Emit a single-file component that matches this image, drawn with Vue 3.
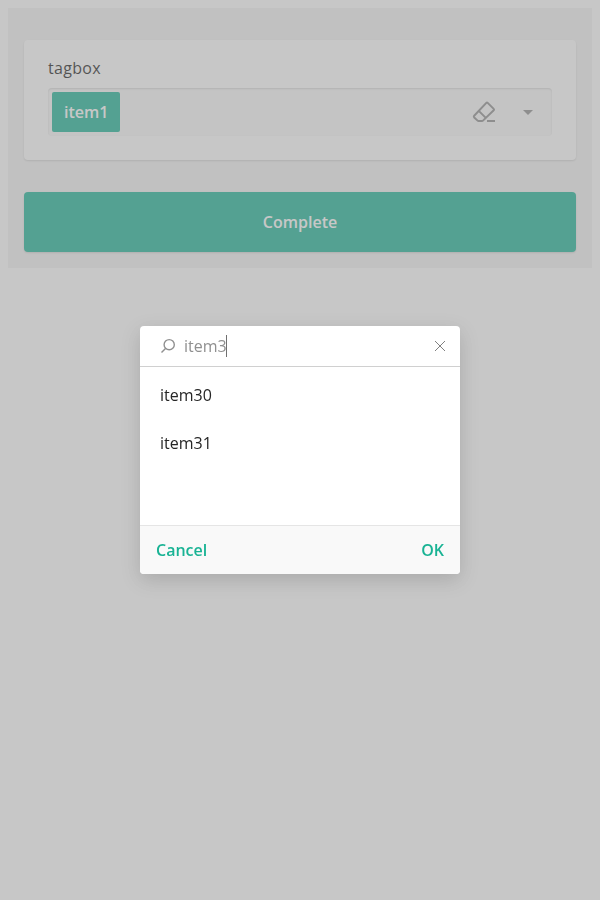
<script setup>
import { ref } from 'vue'

const title = 'tagbox'
const tags = ref(['item1'])
const query = ref('item3')
const options = ['item30', 'item31']
</script>

<template>
  <div class="survey">
    <section class="question">
      <h5 class="title">{{ title }}</h5>
      <div class="field">
        <span v-for="tag in tags" :key="tag" class="tag">{{ tag }}</span>
        <span class="spacer"></span>
        <svg class="eraser" width="24" height="24" viewBox="0 0 24 24" fill="none" stroke="#8c8c8c" stroke-width="2" stroke-linejoin="round">
          <path d="M14.300 2.900a1 1 0 0 1 1.400 0l6 6a1 1 0 0 1 0 1.400L11 20.600a1.400 1.400 0 0 1-1 .4H6.600a1.400 1.400 0 0 1-1-.4l-3.400-3.200a1.200 1.200 0 0 1 0-1.700z" />
          <path d="M6.500 10.600l7.300 7.300M15 21h8" />
        </svg>
        <svg class="arrow" width="10" height="5" viewBox="0 0 10 5"><path d="M0 0h10L5 5z" fill="#8c8c8c" /></svg>
      </div>
    </section>
    <button class="complete">Complete</button>
  </div>

  <div class="overlay">
    <div class="popup">
      <div class="search">
        <svg width="16" height="16" viewBox="0 0 16 16" fill="none" stroke="#909090" stroke-width="1.4">
          <circle cx="9.200" cy="6.700" r="5.100" />
          <path d="M5.500 10.400L1.500 14.400" />
        </svg>
        <span class="query">{{ query }}</span><span class="caret"></span>
        <svg class="close" width="16" height="16" viewBox="0 0 16 16" fill="none" stroke="#808080" stroke-width="1">
          <path d="M3 3l10 10M13 3L3 13" />
        </svg>
      </div>
      <ul class="list">
        <li v-for="option in options" :key="option">{{ option }}</li>
      </ul>
      <div class="footer">
        <button>Cancel</button>
        <button>OK</button>
      </div>
    </div>
  </div>
</template>

<style>
body {
  margin: 0;
  background: #fff;
}
</style>

<style scoped>
* {
  box-sizing: border-box;
}
.survey {
  margin: 8px;
  padding: 32px 16px 16px;
  height: 260px;
  background: #f3f3f3;
  font: 400 16px/24px 'Open Sans', sans-serif;
  color: #161616;
}
.question {
  height: 120px;
  padding: 16px 24px 24px;
  border-radius: 4px;
  background: #fff;
  box-shadow: 0 1px 2px rgba(0, 0, 0, 0.15);
}
.title {
  margin: 0 0 8px;
  font-size: 16px;
  font-weight: 400;
  line-height: 24px;
  letter-spacing: 0.3px;
}
.field {
  display: flex;
  align-items: center;
  height: 48px;
  padding: 4px 19px 4px 4px;
  border-radius: 4px;
  background: #f9f9f9;
  box-shadow: inset 0 1px 2px rgba(0, 0, 0, 0.15);
}
.tag {
  height: 40px;
  padding: 8px 12px;
  border-radius: 2px;
  background: #19b394;
  color: #fff;
  font-weight: 600;
}
.spacer {
  flex: 1;
}
.eraser {
  margin-right: 27px;
}
button {
  border: 0;
  font: 600 16px/24px 'Open Sans', sans-serif;
}
.complete {
  display: block;
  width: 100%;
  height: 60px;
  margin-top: 32px;
  border-radius: 4px;
  background: #19b394;
  color: #fff;
  box-shadow: 0 1px 2px rgba(0, 0, 0, 0.15);
}
.overlay {
  position: fixed;
  inset: 0;
  display: flex;
  align-items: center;
  justify-content: center;
  background: rgba(144, 144, 144, 0.5);
  font: 400 16px/24px 'Open Sans', sans-serif;
}
.popup {
  display: flex;
  flex-direction: column;
  width: 320px;
  height: 248px;
  border-radius: 4px;
  overflow: hidden;
  background: #fff;
  box-shadow: 0 6px 20px rgba(0, 0, 0, 0.15);
}
.search {
  display: flex;
  align-items: center;
  height: 41px;
  padding: 0 12px 0 20px;
  border-bottom: 1px solid #d0d0d0;
  color: #909090;
}
.query {
  margin-left: 8px;
}
.caret {
  width: 1px;
  height: 22px;
  margin-left: -1px;
  background: #707070;
}
.close {
  margin-left: auto;
}
.list {
  flex: 1;
  margin: 0;
  padding: 4px 0 0;
  list-style: none;
  color: #262626;
}
.list li {
  height: 48px;
  padding: 12px 20px;
}
.footer {
  display: flex;
  align-items: center;
  justify-content: space-between;
  height: 49px;
  padding: 0 16px;
  border-top: 1px solid #e5e5e5;
  background: #f9f9f9;
}
.footer button {
  padding: 0;
  background: none;
  color: #19b394;
}
</style>
